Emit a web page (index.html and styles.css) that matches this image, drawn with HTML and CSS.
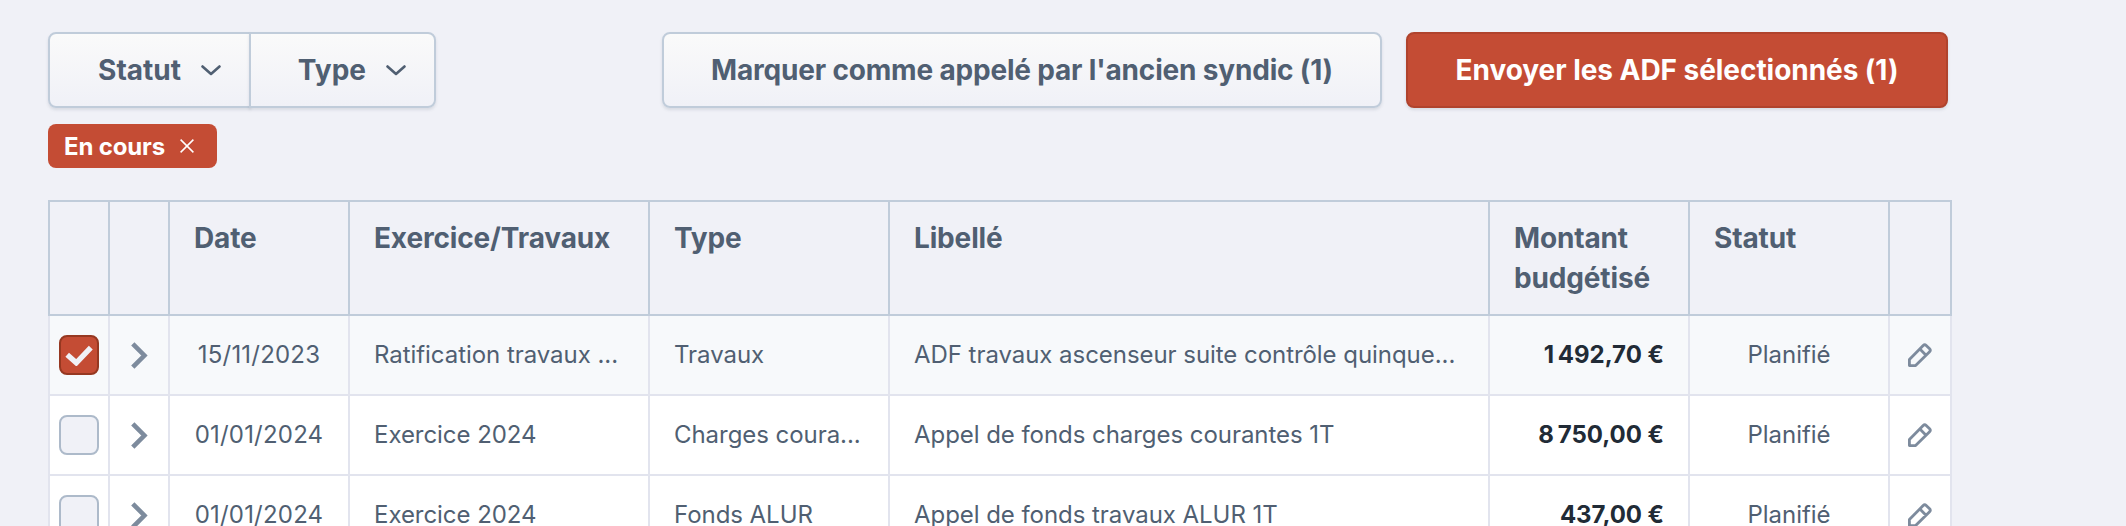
FILE: index.html
```html
<!DOCTYPE html>
<html lang="fr">
<head>
    <meta charset="UTF-8">
    <meta name="viewport" content="width=device-width, initial-scale=1.0">
    <title>Appels de fonds</title>
    <link rel="stylesheet" href="styles.css">
</head>
<body>
    <svg class="sprite" width="0" height="0">
        <symbol id="icon-down" viewBox="0 0 20 11">
            <path d="M1.5 1.5L10 9L18.5 1.5" fill="none" stroke="currentColor" stroke-width="2.6" stroke-linecap="round" stroke-linejoin="round"/>
        </symbol>
        <symbol id="icon-right" viewBox="0 0 17 27">
            <path d="M1.8 1.8L13.4 13.5L1.8 25.2" fill="none" stroke="currentColor" stroke-width="4.6"/>
        </symbol>
        <symbol id="icon-edit" viewBox="0 0 24 24">
            <path d="M1.4 22.6V16.6L15.2 2.5Q16.7 1 18.2 2.5L21.6 5.8Q23 7.3 21.6 8.7L7.6 22.6ZM11.9 6L18 12.2" fill="none" stroke="currentColor" stroke-width="2.8" stroke-linejoin="round"/>
        </symbol>
    </svg>

    <div class="toolbar">
        <div class="filters">
            <button class="btn">Statut <svg class="caret"><use href="#icon-down"/></svg></button>
            <button class="btn">Type <svg class="caret"><use href="#icon-down"/></svg></button>
        </div>
        <div class="actions">
            <button class="btn mark">Marquer comme appelé par l'ancien syndic (1)</button>
            <button class="btn primary">Envoyer les ADF sélectionnés (1)</button>
        </div>
    </div>

    <div class="tag">
        En cours
        <svg class="close" viewBox="0 0 14 14"><path d="M.6 .6L13.4 13.4M13.4 .6L.6 13.4" stroke="currentColor" stroke-width="1.5"/></svg>
    </div>

    <table class="adf">
        <colgroup>
            <col class="w-icon"><col class="w-icon"><col class="w-date"><col class="w-exercice"><col class="w-type">
            <col class="w-libelle"><col class="w-montant"><col class="w-statut"><col class="w-edit">
        </colgroup>
        <thead>
            <tr>
                <th></th>
                <th></th>
                <th>Date</th>
                <th>Exercice/Travaux</th>
                <th>Type</th>
                <th>Libellé</th>
                <th>Montant budgétisé</th>
                <th>Statut</th>
                <th></th>
            </tr>
        </thead>
        <tbody>
            <tr class="selected">
                <td class="icon"><span class="checkbox checked"><svg viewBox="0 0 28 21"><path d="M2.2 9.8L11.3 17.8L25.8 2.6" fill="none" stroke="currentColor" stroke-width="5.4"/></svg></span></td>
                <td class="icon"><svg class="expand"><use href="#icon-right"/></svg></td>
                <td class="center date">15/11/2023</td>
                <td>Ratification travaux ...</td>
                <td>Travaux</td>
                <td>ADF travaux ascenseur suite contrôle quinque...</td>
                <td class="amount">1&#8239;492,70&nbsp;€</td>
                <td class="center">Planifié</td>
                <td class="icon"><svg class="edit"><use href="#icon-edit"/></svg></td>
            </tr>
            <tr>
                <td class="icon"><span class="checkbox"></span></td>
                <td class="icon"><svg class="expand"><use href="#icon-right"/></svg></td>
                <td class="center date">01/01/2024</td>
                <td>Exercice 2024</td>
                <td>Charges coura...</td>
                <td>Appel de fonds charges courantes 1T</td>
                <td class="amount">8&#8239;750,00&nbsp;€</td>
                <td class="center">Planifié</td>
                <td class="icon"><svg class="edit"><use href="#icon-edit"/></svg></td>
            </tr>
            <tr>
                <td class="icon"><span class="checkbox"></span></td>
                <td class="icon"><svg class="expand"><use href="#icon-right"/></svg></td>
                <td class="center date">01/01/2024</td>
                <td>Exercice 2024</td>
                <td>Fonds ALUR</td>
                <td>Appel de fonds travaux ALUR 1T</td>
                <td class="amount">437,00&nbsp;€</td>
                <td class="center">Planifié</td>
                <td class="icon"><svg class="edit"><use href="#icon-edit"/></svg></td>
            </tr>
        </tbody>
    </table>
</body>
</html>
```
FILE: styles.css
```css
* {
    box-sizing: border-box;
}
html {
    height: 100%;
    overflow: hidden;
}
body {
    margin: 0;
    height: 100%;
    padding: 32px 48px 0;
    overflow: hidden;
    background-color: #f0f1f7;
    color: #505f72;
    font-family: Inter, "Liberation Sans", sans-serif;
    font-size: 24px;
    letter-spacing: -0.05px;
}
.sprite {
    display: none;
}
.toolbar {
    display: flex;
    justify-content: space-between;
    width: 1900px;
}
.filters {
    display: flex;
}
.actions {
    display: flex;
    gap: 24px;
}
.btn {
    display: flex;
    align-items: center;
    justify-content: center;
    height: 76px;
    padding: 0;
    border: 2px solid #c0ccda;
    border-radius: 8px;
    background: linear-gradient(#fafafa, #f0f1f7);
    box-shadow: 0 2px 3px rgba(80, 95, 114, 0.15);
    color: #505f72;
    font-family: inherit;
    font-size: 28px;
    font-weight: 650;
    letter-spacing: -0.18px;
    white-space: nowrap;
    cursor: pointer;
}
.filters .btn {
    justify-content: flex-end;
    padding-right: 28px;
    letter-spacing: 0;
}
.filters .btn:first-child {
    width: 203px;
    border-radius: 8px 0 0 8px;
}
.filters .btn:last-child {
    width: 187px;
    margin-left: -2px;
    border-radius: 0 8px 8px 0;
}
.caret {
    width: 20px;
    height: 11px;
    margin-left: 20px;
}
.mark {
    width: 720px;
}
.btn.primary {
    width: 542px;
    border-color: #b0432d;
    background: #c44c34;
    color: #fff;
    letter-spacing: -0.05px;
}
.tag {
    display: flex;
    align-items: center;
    width: 169px;
    height: 44px;
    margin-top: 16px;
    padding-left: 16px;
    border-radius: 8px;
    background-color: #c44c34;
    color: #fff;
    font-weight: 650;
    letter-spacing: -0.15px;
}
.close {
    width: 14px;
    height: 14px;
    margin-left: 15px;
}
.adf {
    width: 1904px;
    margin-top: 32px;
    border-collapse: collapse;
    table-layout: fixed;
}
.w-icon {
    width: 60px;
}
.w-date {
    width: 180px;
}
.w-exercice {
    width: 300px;
}
.w-type {
    width: 240px;
}
.w-libelle {
    width: 600px;
}
.w-montant, .w-statut {
    width: 200px;
}
.w-edit {
    width: 62px;
}
.adf th {
    height: 114px;
    padding: 16px 23px 16px 24px;
    border: 2px solid #c0ccda;
    font-size: 28px;
    font-weight: 650;
    letter-spacing: -0.15px;
    line-height: 40px;
    text-align: left;
    vertical-align: top;
}
.adf td {
    height: 80px;
    padding: 0 24px;
    border: 2px solid #e2e4ee;
    background-color: #fff;
    line-height: 40px;
    white-space: nowrap;
}
.adf .selected td {
    background-color: #f7f9fb;
}
.adf .center {
    padding: 0;
    text-align: center;
}
.adf .date {
    letter-spacing: 0.2px;
}
.adf .amount {
    color: #212b36;
    font-weight: 650;
    text-align: right;
}
.adf .icon {
    padding: 0;
    font-size: 0;
    line-height: 0;
    text-align: center;
}
.checkbox {
    display: inline-flex;
    align-items: center;
    justify-content: center;
    width: 40px;
    height: 40px;
    border: 2px solid #adbaca;
    border-radius: 8px;
    background-color: #f0f1f7;
    vertical-align: middle;
}
.checkbox.checked {
    border-color: #963821;
    background-color: #c44c34;
    color: #f0f1f7;
}
.checkbox svg {
    width: 28px;
    height: 21px;
}
.expand {
    width: 17px;
    height: 27px;
    color: #7d8b9d;
}
.edit {
    width: 24px;
    height: 24px;
    color: #7d8b9d;
}
```
